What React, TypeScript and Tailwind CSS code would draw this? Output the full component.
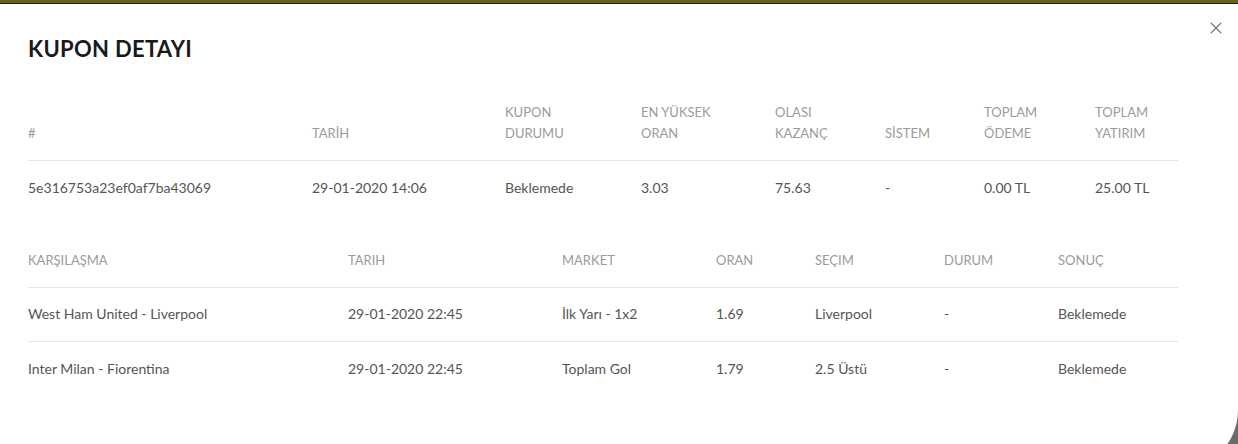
import { X } from 'lucide-react';

const couponCols = [
  { label: ['#'], value: '5e316753a23ef0af7ba43069' },
  { label: ['TARİH'], value: '29-01-2020 14:06' },
  { label: ['KUPON', 'DURUMU'], value: 'Beklemede' },
  { label: ['EN YÜKSEK', 'ORAN'], value: '3.03' },
  { label: ['OLASI', 'KAZANÇ'], value: '75.63' },
  { label: ['SİSTEM'], value: '-' },
  { label: ['TOPLAM', 'ÖDEME'], value: '0.00 TL' },
  { label: ['TOPLAM', 'YATIRIM'], value: '25.00 TL' },
];

const matchHeaders = ['KARŞILAŞMA', 'TARIH', 'MARKET', 'ORAN', 'SEÇIM', 'DURUM', 'SONUÇ'];

const matches = [
  ['West Ham United - Liverpool', '29-01-2020 22:45', 'İlk Yarı - 1x2', '1.69', 'Liverpool', '-', 'Beklemede'],
  ['Inter Milan - Fiorentina', '29-01-2020 22:45', 'Toplam Gol', '1.79', '2.5 Üstü', '-', 'Beklemede'],
];

export default function App() {
  return (
    <div className="h-[444px] w-[1238px] overflow-hidden bg-[#6b6b6b] font-['Lato',sans-serif]">
      <div className="h-[3px] bg-[#6b600f]" />
      <div className="h-px bg-[#0f2232]" />
      <div className="relative h-[466px] bg-white rounded-br-[60px] px-7 pt-[31px]">
        <button className="absolute right-[12px] top-[14px] text-[#7a7a7a]">
          <X className="w-[20px] h-[20px]" strokeWidth={1.4} />
        </button>
        <h1 className="text-[22px] font-bold text-[#1a1a1a] leading-[28px] tracking-[0.3px]">KUPON DETAYI</h1>

        <div className="mt-[38px] w-[1150px]">
          <div className="grid grid-cols-[284px_193px_136px_134px_110px_99px_111px_83px] border-b border-[#e5e5e5] h-[60px] items-end pb-[16px]">
            {couponCols.map((c, i) => (
              <div key={i} className="text-[13px] leading-[21px] text-[#9b9b9b]">
                {c.label.map((l) => (
                  <div key={l}>{l}</div>
                ))}
              </div>
            ))}
          </div>
          <div className="grid grid-cols-[284px_193px_136px_134px_110px_99px_111px_83px] h-[54px] items-center pb-[2px]">
            {couponCols.map((c, i) => (
              <div key={i} className="text-[14px] text-[#555555]">{c.value}</div>
            ))}
          </div>
        </div>

        <div className="mt-[19px] w-[1150px]">
          <div className="grid grid-cols-[320px_214px_154px_99px_129px_114px_120px] h-[54px] items-center border-b border-[#e5e5e5]">
            {matchHeaders.map((h) => (
              <div key={h} className="text-[13px] text-[#9b9b9b]">{h}</div>
            ))}
          </div>
          {matches.map((row, r) => (
            <div
              key={r}
              className={
                'grid grid-cols-[320px_214px_154px_99px_129px_114px_120px] h-[54px] items-center pb-[2px]' +
                (r < matches.length - 1 ? ' border-b border-[#e5e5e5]' : '')
              }
            >
              {row.map((cell, i) => (
                <div key={i} className="text-[14px] text-[#555555]">{cell}</div>
              ))}
            </div>
          ))}
        </div>
      </div>
    </div>
  );
}
